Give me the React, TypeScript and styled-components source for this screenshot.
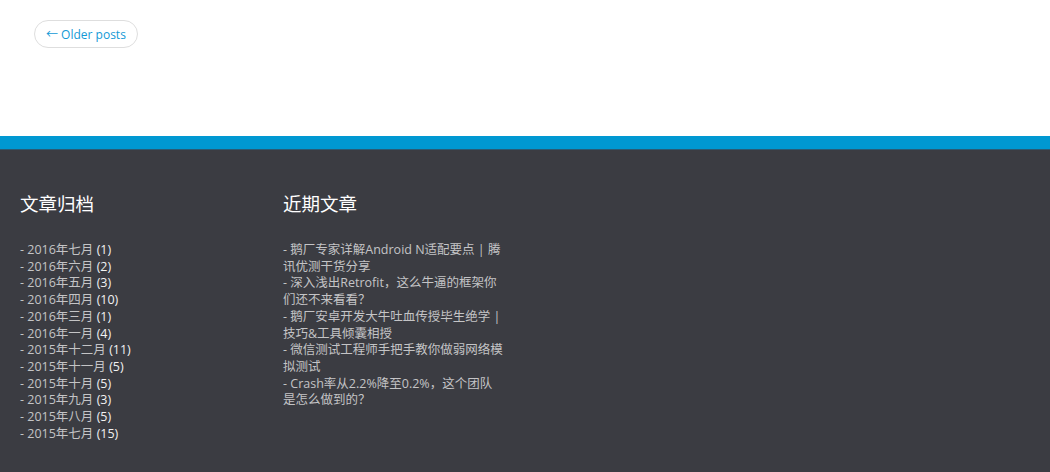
import styled, { createGlobalStyle } from 'styled-components'

const archives = [
  { label: '2016年七月', count: 1 },
  { label: '2016年六月', count: 2 },
  { label: '2016年五月', count: 3 },
  { label: '2016年四月', count: 10 },
  { label: '2016年三月', count: 1 },
  { label: '2016年一月', count: 4 },
  { label: '2015年十二月', count: 11 },
  { label: '2015年十一月', count: 5 },
  { label: '2015年十月', count: 5 },
  { label: '2015年九月', count: 3 },
  { label: '2015年八月', count: 5 },
  { label: '2015年七月', count: 15 },
]

const posts = [
  '鹅厂专家详解Android N适配要点 | 腾讯优测干货分享',
  '深入浅出Retrofit，这么牛逼的框架你们还不来看看？',
  '鹅厂安卓开发大牛吐血传授毕生绝学 | 技巧&工具倾囊相授',
  '微信测试工程师手把手教你做弱网络模拟测试',
  'Crash率从2.2%降至0.2%，这个团队是怎么做到的？',
]

const GlobalStyle = createGlobalStyle`
  html, body {
    margin: 0;
    padding: 0;
    background: #3b3c42;
  }
  body {
    font-family: "Open Sans", "Noto Sans CJK SC", sans-serif;
  }
`

export default function App() {
  return (
    <Page>
      <GlobalStyle />
      <Main>
        <Nav>
          <OlderButton href="#">← Older posts</OlderButton>
        </Nav>
      </Main>
      <Footer>
        <Widgets>
          <Widget>
            <WidgetTitle>文章归档</WidgetTitle>
            <List>
              {archives.map((a) => (
                <Item key={a.label}>
                  - <ItemLink href="#">{a.label}</ItemLink> <Count>({a.count})</Count>
                </Item>
              ))}
            </List>
          </Widget>
          <Widget>
            <WidgetTitle>近期文章</WidgetTitle>
            <List>
              {posts.map((p) => (
                <Item key={p}>
                  - <ItemLink href="#">{p}</ItemLink>
                </Item>
              ))}
            </List>
          </Widget>
        </Widgets>
      </Footer>
    </Page>
  )
}

const Page = styled.div`
  min-height: 472px;
  display: flex;
  flex-direction: column;
`

const Main = styled.main`
  background: #fff;
  height: 136px;
  padding: 20px 34px 0;
  box-sizing: border-box;
`

const Nav = styled.nav`
  display: flex;
`

const OlderButton = styled.a`
  display: inline-flex;
  align-items: center;
  height: 26px;
  padding: 0 11px;
  border: 1px solid #dedede;
  border-radius: 14px;
  color: #139ad6;
  font-size: 12px;
  text-decoration: none;
`

const Footer = styled.footer`
  flex: 1;
  background: #3b3c42;
  border-top: 13px solid #0098d2;
  box-shadow: inset 0 1px 0 #2a5b75;
`

const Widgets = styled.div`
  display: flex;
  padding: 42px 20px 30px;
`

const Widget = styled.section`
  width: 220px;
  margin-right: 43px;
`

const WidgetTitle = styled.h3`
  margin: 0 0 25px;
  color: #fff;
  font-size: 18.5px;
  font-weight: 400;
  line-height: 26px;
`

const List = styled.ul`
  list-style: none;
  margin: 0;
  padding: 0;
`

const Item = styled.li`
  color: #c4c4c6;
  font-size: 12.5px;
  line-height: 16.7px;
`

const ItemLink = styled.a`
  color: #c4c4c6;
  text-decoration: none;
`

const Count = styled.span`
  color: #f2f2f2;
`
